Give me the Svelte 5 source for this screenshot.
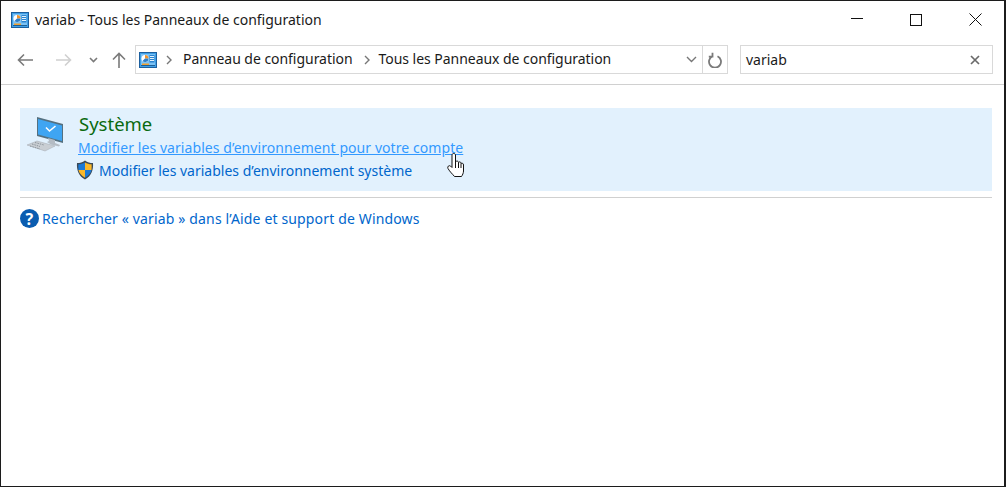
<script>
  const crumbs = ['Panneau de configuration', 'Tous les Panneaux de configuration'];
</script>

{#snippet cpIcon()}
  <svg class="cp-icon" width="18" height="16" viewBox="0 0 18 16">
    <rect x="0.500" y="0.500" width="17" height="15" fill="#3f9fe6" stroke="#1c5f9e" />
    <rect x="2" y="2" width="14" height="11" fill="#7cc2f4" />
    <circle cx="6" cy="6.500" r="3.500" fill="#fff" />
    <path d="M6 3A3.500 3.500 0 0 1 9.500 6.500H6Z" fill="#f0932b" />
    <path d="M6 6.500H9.500A3.500 3.500 0 0 1 3.500 9Z" fill="#2f7fc8" />
    <rect x="10.500" y="3" width="5" height="7.500" fill="#2a84d0" />
    <path d="M11 4.500h4M11 6.500h4M11 8.500h4" stroke="#e4f2fc" />
    <rect x="3" y="11.500" width="7" height="1.500" fill="#f0a030" />
    <rect x="2" y="13" width="14" height="1" fill="#1d5f96" />
  </svg>
{/snippet}

<div class="window">
  <header class="titlebar">
    {@render cpIcon()}
    <span class="title">variab - Tous les Panneaux de configuration</span>
    <div class="controls">
      <svg width="12" height="12" viewBox="0 0 12 12"><path d="M0 4.500h12" stroke="#111" /></svg>
      <svg width="12" height="12" viewBox="0 0 12 12"><rect x="0.500" y="0.500" width="11" height="11" fill="none" stroke="#111" /></svg>
      <svg width="13" height="13" viewBox="0 0 13 13"><path d="M0.500 0.500l12 12M12.500 0.500l-12 12" stroke="#111" /></svg>
    </div>
  </header>

  <nav class="toolbar">
    <div class="nav-buttons">
      <svg width="16" height="14" viewBox="0 0 16 14"><path d="M16 7H1.500M7 1.500L1.500 7L7 12.500" fill="none" stroke="#7a7a7a" stroke-width="1.600" /></svg>
      <svg width="16" height="14" viewBox="0 0 16 14"><path d="M0 7H14.500M9 1.500L14.500 7L9 12.500" fill="none" stroke="#d0d0d0" stroke-width="1.600" /></svg>
      <svg width="9" height="6" viewBox="0 0 9 6"><path d="M1 1l3.500 3.500L8 1" fill="none" stroke="#7a7a7a" stroke-width="1.600" /></svg>
      <svg width="14" height="16" viewBox="0 0 14 16"><path d="M7 16V1.500M1 7.500L7 1.500L13 7.500" fill="none" stroke="#7a7a7a" stroke-width="1.600" /></svg>
    </div>
    <div class="address">
      <div class="path">
        {@render cpIcon()}
        {#each crumbs as crumb}
          <svg class="chevron" width="6" height="10" viewBox="0 0 6 10"><path d="M1 1l4 4l-4 4" fill="none" stroke="#777" stroke-width="1.400" /></svg>
          <span>{crumb}</span>
        {/each}
        <svg class="dropdown" width="11" height="7" viewBox="0 0 11 7"><path d="M1 1l4.500 4.500L10 1" fill="none" stroke="#777" stroke-width="1.400" /></svg>
      </div>
      <div class="refresh">
        <svg width="14" height="16" viewBox="0 0 14 16"><path d="M4.500 4.200A6 6 0 1 0 9.500 4.200M4.500 0.800v3.800H0.800" fill="none" stroke="#7a7a7a" stroke-width="1.800" /></svg>
      </div>
    </div>
    <div class="search">
      <span>variab</span>
      <svg width="10" height="10" viewBox="0 0 10 10"><path d="M1 1l8 8M9 1l-8 8" stroke="#6a6a6a" stroke-width="1.700" /></svg>
    </div>
  </nav>

  <main class="content">
    <section class="result">
      <svg class="computer" width="40" height="38" viewBox="0 0 40 38">
        <path d="M11 2L37 9V28L11 21Z" fill="#55707f" />
        <path d="M12 4L36 10.500V26L12 19.500Z" fill="#3fa5f2" />
        <path d="M20 12.500l3.500 3.500l6-5" fill="none" stroke="#fff" stroke-width="1.600" />
        <path d="M22 23l7 2v3l5 2l-1 1.500l-8-2l-4-2.500l2-1Z" fill="#b4bcc4" />
        <path d="M1 30l10-4l18 5l-10 5Z" fill="#c9ced3" stroke="#a2a9b0" stroke-width="0.500" />
        <path d="M6 29l8 2.500M4 31l10 3M9 27.500l9 2.500" stroke="#8d959c" stroke-width="1" stroke-dasharray="1.500 1" />
      </svg>
      <div class="result-body">
        <h2>Système</h2>
        <a class="hover" href="#compte">Modifier les variables d’environnement pour votre compte</a>
        <div class="admin-link">
          <svg width="18" height="20" viewBox="0 0 18 20">
            <path d="M9 0.500C6.500 2.500 4 3 1 3C0.500 10 2.500 16 9 19.500C15.500 16 17.500 10 17 3C14 3 11.500 2.500 9 0.500Z" fill="#3b4a57" />
            <path d="M9 2.500V10H2.500C2.300 8 2.300 6 2.400 4.300C4.800 4.200 7 3.700 9 2.500Z" fill="#1b79d6" />
            <path d="M9 2.500C11 3.700 13.200 4.200 15.600 4.300C15.700 6 15.700 8 15.500 10H9Z" fill="#fbb829" />
            <path d="M2.500 10H9V17.700C5 15.300 3.100 13 2.500 10Z" fill="#fbb829" />
            <path d="M9 10H15.500C14.900 13 13 15.300 9 17.700Z" fill="#1b79d6" />
          </svg>
          <a href="#systeme">Modifier les variables d’environnement système</a>
        </div>
      </div>
      <svg class="cursor" width="17" height="25" viewBox="0 0 17 25">
        <path d="M5 2C5 0 8.500 0 8.500 2V9C9.500 7.500 11.500 8 11.500 9.500C12.500 8.300 14 9 14 10.500C15 9.500 16.500 10.500 16.500 12V18C16.500 20 15.500 22 14.500 23.500H7.500C5.500 21 3 19 1 15.500C0 13.500 2 12 3.500 13L5 14.500Z" fill="#fff" stroke="#111" />
        <path d="M8.500 9V15M11.500 9.500V15M14 10.500V15" stroke="#111" fill="none" />
      </svg>
    </section>
    <hr />
    <div class="help">
      <span class="help-icon">?</span>
      <a href="#aide">Rechercher « variab » dans l’Aide et support de Windows</a>
    </div>
  </main>
</div>

<style>
  :global(body) {
    margin: 0;
    background: #fff;
  }

  .window {
    box-sizing: border-box;
    width: 1006px;
    height: 487px;
    border: 1px solid #1c1c1c;
    border-right-width: 2px;
    background: #fff;
    font-family: 'Noto Sans', sans-serif;
    font-size: 14px;
    color: #1a1a1a;
    overflow: hidden;
  }

  .titlebar {
    display: flex;
    align-items: center;
    height: 37px;
    padding-left: 10px;
  }

  .title {
    margin-left: 6px;
  }

  .controls {
    margin-left: auto;
    display: flex;
    align-items: center;
    gap: 47px;
    padding-right: 22px;
  }

  .toolbar {
    display: flex;
    align-items: center;
    box-sizing: border-box;
    height: 47px;
    padding: 0 0 3px 16px;
    border-bottom: 1px solid #d0d0d0;
  }

  .nav-buttons {
    display: flex;
    align-items: center;
    width: 118px;
  }

  .nav-buttons svg:nth-child(2) {
    margin-left: 23px;
  }

  .nav-buttons svg:nth-child(3) {
    margin-left: 17px;
  }

  .nav-buttons svg:nth-child(4) {
    margin-left: 14px;
  }

  .address {
    display: flex;
    width: 593px;
    height: 29px;
    box-sizing: border-box;
    border: 1px solid #d9d9d9;
  }

  .path {
    flex: 1;
    display: flex;
    align-items: center;
    padding-left: 3px;
    letter-spacing: -0.04px;
  }

  .path span {
    margin-bottom: 2px;
  }

  .path .chevron {
    margin: 0 9px 0 9px;
  }

  .path span + .chevron {
    margin-left: 11px;
  }

  .path .cp-icon + .chevron {
    margin-right: 11px;
  }

  .dropdown {
    margin-left: auto;
    margin-right: 5px;
  }

  .refresh {
    width: 24px;
    display: flex;
    align-items: center;
    justify-content: center;
    border-left: 1px solid #d9d9d9;
  }

  .search {
    display: flex;
    align-items: center;
    justify-content: space-between;
    box-sizing: border-box;
    width: 253px;
    height: 29px;
    margin-left: 12px;
    padding: 0 12px 0 5px;
    border: 1px solid #d9d9d9;
  }

  .content {
    padding: 23px 12px 0 19px;
  }

  .result {
    position: relative;
    display: flex;
    height: 83px;
    background: #e2f1fd;
  }

  .computer {
    margin: 7px 0 0 6px;
  }

  .result-body {
    margin-left: 13px;
    padding-top: 4px;
  }

  h2 {
    margin: 0;
    font-size: 18.500px;
    font-weight: 400;
    line-height: 24px;
    color: #0a6a10;
  }

  a {
    color: #0066cc;
    text-decoration: none;
  }

  a.hover {
    display: block;
    margin: 2px 0 0 -1px;
    line-height: 20px;
    color: #3399ff;
    text-decoration: underline;
    letter-spacing: 0.07px;
  }

  .admin-link {
    display: flex;
    align-items: center;
    margin: 2px 0 0 -3px;
    gap: 5px;
  }

  .cursor {
    position: absolute;
    left: 427px;
    top: 45px;
  }

  hr {
    margin: 6px 0 0;
    border: 0;
    border-top: 1px solid #d0d0d0;
  }

  .help {
    display: flex;
    align-items: center;
    gap: 3px;
    margin-top: 11px;
    letter-spacing: 0.15px;
  }

  .help-icon {
    display: flex;
    align-items: center;
    justify-content: center;
    width: 19px;
    height: 19px;
    border-radius: 50%;
    background: #0a5cb0;
    color: #fff;
    font-weight: 700;
    font-size: 16px;
  }
</style>
